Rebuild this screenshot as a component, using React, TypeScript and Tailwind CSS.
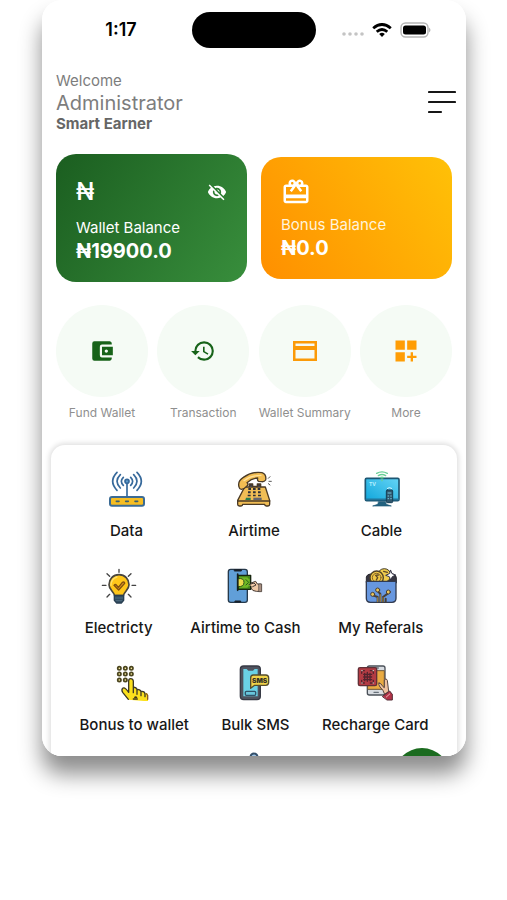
import React from "react";
import {
  MdAccountBalanceWallet,
  MdCardGiftcard,
  MdDashboardCustomize,
  MdHistory,
  MdVisibilityOff,
} from "react-icons/md";

interface Service {
  label: string;
  icon: React.ReactNode;
}

function Art({ children }: { children: React.ReactNode }) {
  return (
    <svg
      viewBox="0 0 108 108"
      className="size-9"
      fill="none"
      strokeLinecap="round"
      strokeLinejoin="round"
      aria-hidden="true"
    >
      {children}
    </svg>
  );
}

function RouterArt() {
  return (
    <Art>
      <rect x="3" y="78" width="102" height="26" rx="6" fill="#f6bd22" stroke="#3b6b95" strokeWidth="6" />
      <path d="M22 91h8M50 91h8M78 91h8" stroke="#3b5f6e" strokeWidth="5" />
      <g stroke="#36699b" strokeWidth="5">
        <path d="M54 38v40" />
        <path d="M24 4Q-2 31 24 58M34 11Q14 31 34 51M43 19Q31 31 43 43" />
        <path d="M84 4Q110 31 84 58M74 11Q94 31 74 51M65 19Q77 31 65 43" />
        <circle cx="54" cy="31" r="6" fill="#5f9bc9" />
      </g>
    </Art>
  );
}

function TelephoneArt() {
  return (
    <Art>
      <g stroke="#4a3a26" strokeWidth="4">
        <path d="M26 48h62l13 40v12q0 5-5 5h-5q-5 0-5-5H20q0 5-5 5h-5q-5 0-5-5V88z" fill="#f0bd55" />
        <path d="M6 90h95" />
        <path d="M40 47V39h10v7h14v-7h10v8" fill="#3b3b44" />
        <path
          d="M9 48Q4 30 22 19Q50 0 78 5Q92 10 89 27Q85 33 77 32L68 31Q63 29 65 21Q47 22 33 35Q38 39 34 44Q26 54 16 55Q10 54 9 48z"
          fill="#f2bd52"
        />
      </g>
      <path d="M24 29Q45 13 75 13" stroke="#ffe09a" strokeWidth="4" />
      <g fill="#2b2f38">
        <path d="M37 51h8v6h-8zM51 51h8v6h-8zM65 51h8v6h-8zM36 61h8v6h-8zM51 61h8v6h-8zM66 61h8v6h-8zM35 71h9v5h-9zM51 71h8v5h-8zM66 71h9v5h-9z" />
        <path d="M30 80h14v7H28z" fill="#267d50" />
        <path d="M52 80h25v7H52z" fill="#63656e" />
      </g>
      <path d="M97 22l5-5M99 31h7M97 38l5 4" stroke="#555" strokeWidth="3" />
    </Art>
  );
}

function TvArt() {
  return (
    <Art>
      <defs>
        <linearGradient id="screen" x1="0" y1="1" x2="1" y2="0">
          <stop offset="0" stopColor="#0fa6dc" />
          <stop offset="1" stopColor="#65d4f5" />
        </linearGradient>
      </defs>
      <path d="M44 92h20l3 8 15 5H26l15-5z" fill="#23627f" stroke="#1c5775" strokeWidth="2" />
      <rect x="4" y="22" width="101" height="67" rx="4" fill="url(#screen)" stroke="#1d5673" strokeWidth="5" />
      <path d="M7 85h95" stroke="#23769b" strokeWidth="5" />
      <text x="15" y="46" fontSize="15" fontWeight="700" fill="#b9f0ff" fontFamily="Inter, sans-serif">
        TV
      </text>
      <g stroke="#68cf96" strokeWidth="4">
        <path d="M38 7Q54-2 70 7M43 14Q54 7 65 14M49 20Q54 17 59 20" />
        <path d="M54 23v6" />
      </g>
      <rect x="67" y="57" width="19" height="38" rx="3" fill="#31566c" stroke="#163f56" strokeWidth="3" />
      <path d="M72 66h9M72 75h2M80 75h2M72 83h2M80 83h2" stroke="#73c5de" strokeWidth="3" />
      <path d="M70 52q6-5 13 0" stroke="#d8f7ff" strokeWidth="3" />
    </Art>
  );
}

function BulbArt() {
  return (
    <Art>
      <path d="M54 4v9M18 17l8 8M90 17l-8 8M4 52h11M93 52h11M18 87l8-8M90 87l-8-8" stroke="#444" strokeWidth="4" />
      <path
        d="M54 20c-18 0-30 14-30 30 0 15 14 20 17 33h26c3-13 17-18 17-33 0-16-12-30-30-30z"
        fill="#ffc61a"
        stroke="#49463e"
        strokeWidth="5"
      />
      <path d="M30 52c0-13 8-22 18-25" stroke="#ffe169" strokeWidth="4" />
      <path d="M39 52q4-5 8 0l5 6 12-15q7-3 7 3L53 66z" fill="#dc9420" stroke="#80500f" strokeWidth="4" />
      <path d="M40 82h28v15l-7 8H47l-7-8z" fill="#304c62" stroke="#283e51" strokeWidth="4" />
      <path d="M43 90h22M45 98h18" stroke="#5f7b8c" strokeWidth="2" />
    </Art>
  );
}

function CashPhoneArt() {
  return (
    <Art>
      <rect x="4" y="4" width="57" height="99" rx="7" fill="#619fd8" stroke="#26394b" strokeWidth="4" />
      <path d="M23 5h20v4H23zM25 99h16v3H25z" fill="#19212b" stroke="#19212b" strokeWidth="3" />
      <path d="M72 45l14-5 5 8h12v22H88q-12 0-16-9z" fill="#efc9a6" stroke="#453a35" strokeWidth="3" />
      <path d="M96 48h8v23h-8z" fill="#aa9183" stroke="#4c4541" strokeWidth="2" />
      <path d="M33 22h38v42H33z" fill="#45861c" stroke="#18270f" strokeWidth="4" />
      <path d="M37 28h24q2 5 7 6v19q-5 1-7 6H37z" fill="#71b825" />
      <path d="M34 32q17-3 17 11T34 56" fill="#eadc50" stroke="#275415" strokeWidth="3" />
      <path d="M57 35l8 8-8 8" stroke="#285d17" strokeWidth="3" />
      <path d="M32 18v49" stroke="#16201a" strokeWidth="5" />
      <path d="M66 50l15-5 6 6-10 5" fill="#efc9a6" stroke="#453a35" strokeWidth="3" />
    </Art>
  );
}

function ReferralArt() {
  return (
    <Art>
      <path d="M10 43V27q2-8 12-9h68q10 2 10 12v14z" fill="#373641" stroke="#27272e" strokeWidth="3" />
      <circle cx="64" cy="22" r="20" fill="#f0cc4d" stroke="#443d27" strokeWidth="3" />
      <circle cx="41" cy="29" r="20" fill="#f0c744" stroke="#514327" strokeWidth="4" />
      <circle cx="41" cy="29" r="13" stroke="#87662a" strokeWidth="3" />
      <path d="M46 21l-8 1 6 7-4 7M62 10l11 3" stroke="#5d4928" strokeWidth="4" />
      <path d="M83 7l4 10 11 4-10 5-5 10-4-10-11-4 11-5z" fill="#fff" stroke="#343344" strokeWidth="3" />
      <path d="M10 40h89v51q0 12-12 12H22q-12 0-12-12z" fill="#6797df" stroke="#313b51" strokeWidth="4" />
      <g stroke="#473f38" strokeWidth="6">
        <path d="M44 101V87L30 82M52 101V78l-7-8M60 101V87l15-11M68 101v-9" />
        <path d="M52 101V80M44 101V89M60 101V89" stroke="#d1aa4e" strokeWidth="2" />
        <circle cx="29" cy="79" r="6" fill="#eac65b" strokeWidth="3" />
        <circle cx="44" cy="66" r="6" fill="#eac65b" strokeWidth="3" />
        <circle cx="76" cy="72" r="6" fill="#eac65b" strokeWidth="3" />
      </g>
    </Art>
  );
}

function KeypadArt() {
  return (
    <Art>
      <path
        d="M37 104L21 83q-5-10 2-15 7-2 15 15V48q0-7 6-7 7 0 8 7v19q9-2 11 6 9-2 11 6 9-4 12 5 10-2 10 7v18z"
        fill="#fbe01c"
      />
      <path
        d="M37 103L20 82q-5-8 1-13 6-3 17 13V48q0-7 6-7 7 0 8 7v35M52 67q9-1 11 6v15M64 73q9 0 11 7v12M76 79q10-1 11 8v8"
        stroke="#3d3927"
        strokeWidth="4"
      />
      <path d="M52 102h12M56 97l3-1 3 1" stroke="#40391e" strokeWidth="4" />
      <path d="M91 86l4 5v12" stroke="#8a5a1d" strokeWidth="4" />
      <g fill="#fff2a6" stroke="#4b451f" strokeWidth="5">
        <circle cx="10" cy="10" r="5" />
        <circle cx="28" cy="10" r="5" />
        <circle cx="46" cy="10" r="5" />
        <circle cx="10" cy="27" r="5" />
        <circle cx="28" cy="27" r="5" />
        <circle cx="46" cy="27" r="5" />
        <circle cx="10" cy="45" r="5" />
        <circle cx="28" cy="45" r="5" />
      </g>
    </Art>
  );
}

function SmsArt() {
  return (
    <Art>
      <rect x="10" y="3" width="60" height="101" rx="10" fill="#4f535f" stroke="#373a45" strokeWidth="4" />
      <path d="M19 12h10l5 5h14l5-5h9v82H19z" fill="#6ad1e5" />
      <rect x="25" y="79" width="31" height="12" rx="3" fill="#69c6dc" stroke="#31546a" strokeWidth="4" />
      <path d="M49 30h37q9 0 9 9v13q0 9-9 9H53L41 70V39q0-9 8-9z" fill="#f1d349" stroke="#554d2c" strokeWidth="4" />
      <text x="68" y="53" fontSize="20" fontWeight="900" textAnchor="middle" fill="#353125" fontFamily="Inter, sans-serif">
        SMS
      </text>
    </Art>
  );
}

function RechargeArt() {
  return (
    <Art>
      <rect x="31" y="3" width="53" height="87" rx="6" fill="#d8dce1" stroke="#4b5159" strokeWidth="4" />
      <path d="M33 17h49v56H33z" fill="#e9ab42" stroke="#6f5737" strokeWidth="3" />
      <path d="M44 9h20M51 82h13" stroke="#68717a" strokeWidth="4" />
      <rect x="4" y="8" width="55" height="54" rx="5" fill="#b33b43" stroke="#613037" strokeWidth="4" />
      <g stroke="#54242e" strokeWidth="4">
        <path d="M14 25v-8h8M40 17h9v8M14 46v8h8M40 54h9v-8" />
        <path d="M23 25v22M31 22v27M39 25v22M20 28h24M20 36h24M20 44h24" />
      </g>
      <path d="M14 17h2M48 17h2M14 54h2M48 54h2" stroke="#e8d5ce" strokeWidth="3" />
      <path d="M66 54q6-1 12 11l4 3V45q6-8 9 1l4 33-12 9q-4-14-14-22-6-8-3-12z" fill="#efc2a0" stroke="#594640" strokeWidth="3" />
      <path d="M77 94l21-16 8 10v17H91z" fill="#b33348" stroke="#542b34" strokeWidth="3" />
      <path d="M88 96l10-9" stroke="#efb5b7" strokeWidth="3" />
    </Art>
  );
}

const topServices: Service[] = [
  { label: "Data", icon: <RouterArt /> },
  { label: "Airtime", icon: <TelephoneArt /> },
  { label: "Cable", icon: <TvArt /> },
];

const middleServices: Service[] = [
  { label: "Electricty", icon: <BulbArt /> },
  { label: "Airtime to Cash", icon: <CashPhoneArt /> },
  { label: "My Referals", icon: <ReferralArt /> },
];

const bottomServices: Service[] = [
  { label: "Bonus to wallet", icon: <KeypadArt /> },
  { label: "Bulk SMS", icon: <SmsArt /> },
  { label: "Recharge Card", icon: <RechargeArt /> },
];

const shortcuts = [
  { label: "Fund Wallet", icon: <MdAccountBalanceWallet className="size-[26px] text-[#176319]" /> },
  { label: "Transaction", icon: <MdHistory className="size-[26px] text-[#176319]" /> },
  {
    label: "Wallet Summary",
    icon: (
      <svg viewBox="0 0 24 20" className="h-5 w-6" fill="#fb9a08" aria-hidden="true">
        <path fillRule="evenodd" d="M0 0h24v20H0zM2.5 2.5v2.5h19V2.5zM2.5 9v8.5h19V9z" />
      </svg>
    ),
  },
  { label: "More", icon: <MdDashboardCustomize className="size-7 text-[#ff9d05]" /> },
];

function StatusBar() {
  return (
    <div className="grid grid-cols-[1fr_124px_1fr] items-center pt-3">
      <time className="pl-2 text-center text-lg leading-9 font-semibold text-black">1:17</time>
      <div className="h-9 rounded-full bg-black" />
      <div className="flex items-center justify-center gap-2 pr-2">
        <svg viewBox="0 0 22 14" className="h-[14px] w-[22px]" fill="#c4c4c4" aria-hidden="true">
          <circle cx="2" cy="11" r="1.8" />
          <circle cx="8" cy="11" r="1.8" />
          <circle cx="14" cy="11" r="1.8" />
          <circle cx="20" cy="11" r="1.8" />
        </svg>
        <svg viewBox="0 0 20 14" className="h-[14px] w-5" fill="none" stroke="#000" strokeWidth="2.8" aria-hidden="true">
          <path d="M1.2 5.2q8.8-7.5 17.6 0M4.7 8.8q5.3-4.6 10.6 0" />
          <path d="M7.2 11q2.8-2.3 5.6 0L10 14z" fill="#000" stroke="none" />
        </svg>
        <svg viewBox="0 0 32 16" className="h-4 w-8" aria-hidden="true">
          <rect x="1" y="1" width="27" height="14" rx="4.5" fill="#fff" stroke="#b5b5b5" strokeWidth="1.4" />
          <rect x="3" y="3.5" width="23" height="9" rx="2.5" />
          <path d="M29 5.5q3 2.5 0 5z" fill="#b5b5b5" />
        </svg>
      </div>
    </div>
  );
}

function ServiceRow({ items, itemClass = "px-1" }: { items: Service[]; itemClass?: string }) {
  return (
    <div className="flex justify-evenly">
      {items.map((s) => (
        <button key={s.label} className={`flex flex-col items-center gap-[14px] ${itemClass}`}>
          {s.icon}
          <span className="text-[15px] leading-5 font-medium whitespace-nowrap text-[#171717]">{s.label}</span>
        </button>
      ))}
    </div>
  );
}

export default function App() {
  return (
    <div className="min-h-screen bg-white pr-[41px] pl-[42px] font-['Inter',sans-serif]">
      <main className="rounded-[20px] shadow-[0_18px_22px_rgba(0,0,0,0.45)]">
        <div className="relative aspect-[424/756] overflow-hidden rounded-[20px] bg-white">
          <StatusBar />

          <header className="flex items-center justify-between px-[14px] pt-[23px] text-[#7d7d7d]">
            <div>
              <p className="text-[15px] leading-5">Welcome</p>
              <h1 className="text-xl leading-6">Administrator</h1>
              <p className="text-[15px] leading-[18px] font-bold text-[#666]">Smart Earner</p>
            </div>
            <button aria-label="Menu" className="-mr-1">
              <svg viewBox="0 0 28 24" className="h-6 w-7" stroke="#171717" strokeWidth="2.2" strokeLinecap="round">
                <path d="M1 2h26M1 12h26M1 22h12" />
              </svg>
            </button>
          </header>

          <section className="flex items-center gap-[14px] px-[14px] pt-[21px] text-white">
            <div className="h-32 flex-1 rounded-[20px] bg-linear-[124deg] from-[#1b5e20] to-[#388e3c] px-5 pt-5">
              <div className="flex h-9 items-center justify-between">
                <span className="text-2xl leading-9 font-medium">₦</span>
                <button aria-label="Hide balance">
                  <MdVisibilityOff className="size-5" />
                </button>
              </div>
              <p className="mt-2 text-[15px] leading-5">Wallet Balance</p>
              <p className="text-xl leading-[26px] font-bold">₦19900.0</p>
            </div>
            <div className="h-[122px] flex-1 rounded-[20px] bg-linear-[57deg] from-[#ff8f00] to-[#ffc107] px-5 pt-5">
              <MdCardGiftcard className="size-[30px]" />
              <p className="mt-2 text-[15px] leading-5 text-[#fff3dc]">Bonus Balance</p>
              <p className="text-xl leading-[26px] font-bold">₦0.0</p>
            </div>
          </section>

          <nav className="flex justify-between px-[14px] pt-[23px]">
            {shortcuts.map((s) => (
              <button key={s.label} className="flex w-[92px] flex-col items-center gap-2">
                <span className="flex size-[92px] items-center justify-center rounded-full bg-[#f5fbf5]">
                  {s.icon}
                </span>
                <span className="text-xs leading-4 whitespace-nowrap text-[#8f8f8f]">{s.label}</span>
              </button>
            ))}
          </nav>

          <section className="mx-[9px] mt-6 flex flex-col gap-[27px] rounded-[14px] bg-white pt-[26px] pb-6 shadow-[0_0_5px_2px_rgba(0,0,0,0.12)]">
            <ServiceRow items={topServices} itemClass="w-[104px]" />
            <ServiceRow items={middleServices} />
            <ServiceRow items={bottomServices} />
            <div className="-mt-[10px] flex justify-center">
              <svg viewBox="0 0 36 36" className="size-9" fill="#9ec4e6" stroke="#34506b" strokeWidth="2">
                <circle cx="18" cy="5" r="3.5" />
                <path d="M4 14h28v20H4z" />
              </svg>
            </div>
          </section>

          <button aria-label="Support" className="absolute right-4 -bottom-12 size-14 rounded-full bg-[#1b6b1f]" />
        </div>
      </main>
    </div>
  );
}
